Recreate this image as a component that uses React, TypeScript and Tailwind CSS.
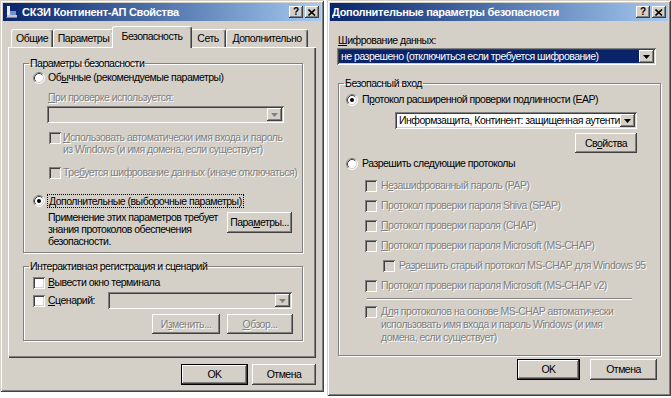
import React from "react";

const FRAME =
  "shadow-[inset_1px_1px_#d4d0c8,inset_-1px_-1px_#404040,inset_2px_2px_#ffffff,inset_-2px_-2px_#808080]";
const RAISED =
  "shadow-[inset_-1px_-1px_#404040,inset_1px_1px_#ffffff,inset_-2px_-2px_#808080,inset_2px_2px_#d4d0c8]";
const SUNKEN =
  "shadow-[inset_1px_1px_#808080,inset_-1px_-1px_#ffffff,inset_2px_2px_#404040,inset_-2px_-2px_#d4d0c8]";
const PANEL = "shadow-[inset_1px_1px_#ffffff,inset_-1px_-1px_#404040,inset_-2px_-2px_#808080]";
const GROUP = "border border-[#808080] shadow-[inset_1px_1px_#ffffff,1px_1px_#ffffff]";
const DIS = "text-[#808080] [text-shadow:1px_1px_0_#ffffff]";

function Radio({ checked = false }: { checked?: boolean }) {
  return (
    <svg width="12" height="12" viewBox="0 0 12 12" className="shrink-0">
      <circle cx="6" cy="6" r="5" fill="#ffffff" />
      <path d="M2.11 9.89 A5.5 5.5 0 0 1 9.89 2.11" stroke="#808080" fill="none" />
      <path d="M9.89 2.11 A5.5 5.5 0 0 1 2.11 9.89" stroke="#ffffff" fill="none" />
      <path d="M2.82 9.18 A4.5 4.5 0 0 1 9.18 2.82" stroke="#404040" fill="none" />
      <path d="M9.18 2.82 A4.5 4.5 0 0 1 2.82 9.18" stroke="#d4d0c8" fill="none" />
      {checked && <circle cx="6" cy="6" r="2" fill="#000000" />}
    </svg>
  );
}

function Check({ disabled = false }: { disabled?: boolean }) {
  return (
    <div
      className={`w-[12px] h-[12px] shrink-0 ${SUNKEN} ${disabled ? "bg-[#d4d0c8]" : "bg-white"}`}
    />
  );
}

function Arrow({ disabled = false }: { disabled?: boolean }) {
  return (
    <svg width="7" height="4" viewBox="0 0 7 4">
      <path d="M0 0H7L3.5 4Z" fill={disabled ? "#808080" : "#000000"} />
    </svg>
  );
}

function Combo({
  className = "",
  children,
  disabled = false,
  selected = false,
}: {
  className?: string;
  children?: React.ReactNode;
  disabled?: boolean;
  selected?: boolean;
}) {
  return (
    <div className={`flex p-[2px] ${SUNKEN} ${disabled ? "bg-[#d4d0c8]" : "bg-white"} ${className}`}>
      <div
        className={`flex-1 min-w-0 overflow-hidden whitespace-nowrap pl-[2px] flex items-center ${
          selected ? "bg-[#0a246a] text-white" : ""
        }`}
      >
        {children}
      </div>
      <div className={`w-[15px] shrink-0 bg-[#d4d0c8] ${RAISED} flex items-center justify-center`}>
        <Arrow disabled={disabled} />
      </div>
    </div>
  );
}

function Btn({
  children,
  className = "",
  def = false,
  disabled = false,
}: {
  children: React.ReactNode;
  className?: string;
  def?: boolean;
  disabled?: boolean;
}) {
  return (
    <div
      className={`flex items-center justify-center whitespace-nowrap bg-[#d4d0c8] ${RAISED} ${
        def ? "border border-black" : ""
      } ${disabled ? DIS : ""} ${className}`}
    >
      {children}
    </div>
  );
}

function TitleButtons() {
  return (
    <div className="flex gap-[2px]">
      <div
        className={`w-[14px] h-[12px] bg-[#d4d0c8] ${RAISED} flex items-center justify-center text-black font-bold text-[10px] leading-[10px] tracking-normal`}
      >
        ?
      </div>
      <div className={`w-[14px] h-[12px] bg-[#d4d0c8] ${RAISED} flex items-center justify-center`}>
        <svg width="8" height="7" viewBox="0 0 8 7">
          <path d="M0.5 0.5L7 6.5M7 0.5L0.5 6.5" stroke="#000" strokeWidth="1.6" />
        </svg>
      </div>
    </div>
  );
}

function TitleBar({ title, icon = false }: { title: string; icon?: boolean }) {
  return (
    <div className="h-[18px] shrink-0 flex items-center bg-linear-to-r from-[#0a246a] to-[#a6caf0] pl-[2px] pr-[2px]">
      {icon && (
        <svg width="14" height="14" viewBox="0 0 14 14" className="mr-[3px] shrink-0">
          <rect x="2" y="1" width="3" height="11" fill="#e8e8e8" />
          <rect x="2" y="10" width="10" height="3" fill="#c8c8c8" />
          <rect x="5" y="6" width="6" height="4" fill="#7090d0" />
          <rect x="1" y="12" width="11" height="1" fill="#808080" />
        </svg>
      )}
      <div className="flex-1 text-white font-bold text-[11px] tracking-[-0.3px] leading-[13px] whitespace-nowrap overflow-hidden">
        {title}
      </div>
      <TitleButtons />
    </div>
  );
}

function Tab({ children, className = "", sel = false }: { children: React.ReactNode; className?: string; sel?: boolean }) {
  return (
    <div
      className={`bg-[#d4d0c8] rounded-t-[3px] border-t border-l border-r border-t-white border-l-white border-r-[#404040] shadow-[inset_-1px_0_#808080] flex items-center justify-center whitespace-nowrap ${
        sel ? "h-[22px] -mx-[2px] -mb-[1px] relative z-10 pb-[3px]" : "h-[18px]"
      } ${className}`}
    >
      {children}
    </div>
  );
}

function LeftDialog() {
  return (
    <div className={`w-[324px] h-[392px] shrink-0 bg-[#d4d0c8] p-[3px] flex flex-col ${FRAME}`}>
      <TitleBar title="СКЗИ Континент-АП Свойства" icon />
      <div className="flex items-end h-[26px] pl-[8px] shrink-0">
        <Tab className="w-[42px]">Общие</Tab>
        <Tab className="w-[61px]">Параметры</Tab>
        <Tab className="w-[80px]" sel>
          Безопасность
        </Tab>
        <Tab className="w-[36px]">Сеть</Tab>
        <Tab className="w-[82px]">Дополнительно</Tab>
      </div>
      <div className={`ml-[5px] w-[308px] h-[311px] shrink-0 ${PANEL} pt-[10px] pl-[15px]`}>
        <fieldset className={`w-[280px] ${GROUP}`}>
          <legend className="ml-[5px] px-[1px] leading-[13px]">Параметры безопасности</legend>
          <div className="pl-[9px] pb-[5px] whitespace-nowrap">
            <div className="flex items-center gap-[3px] h-[13px] mt-[1px]">
              <Radio />
              <span>
                Об<span className="underline">ы</span>чные (рекомендуемые параметры)
              </span>
            </div>
            <div className={`pl-[15px] mt-[7px] h-[13px] ${DIS}`}>
              <span className="underline">П</span>ри проверке используется:
            </div>
            <Combo className="ml-[14px] mt-[2px] w-[237px] h-[17px]" disabled />
            <div className="flex items-start gap-[2px] ml-[16px] mt-[8px]">
              <div className="mt-[1px]">
                <Check disabled />
              </div>
              <div className={`leading-[12px] ${DIS}`}>
                <span className="underline">И</span>спользовать автоматически имя входа и пароль
                <br />
                из Windows (и имя домена, если существует)
              </div>
            </div>
            <div className="flex items-center gap-[2px] ml-[16px] mt-[11px] h-[13px]">
              <Check disabled />
              <div className={DIS}>
                Тре<span className="underline">б</span>уется шифрование данных (иначе отключаться)
              </div>
            </div>
            <div className="flex items-center gap-[2px] h-[14px] mt-[15px]">
              <Radio checked />
              <span className="border border-dotted border-black px-[1px] leading-[12px]">
                <span className="underline">Д</span>ополнительные (выборочные параметры)
              </span>
            </div>
            <div className="flex mt-[3px]">
              <div className="pl-[15px] w-[194px] leading-[12px]">
                Применение этих параметров требует
                <br />
                знания протоколов обеспечения
                <br />
                безопасности.
              </div>
              <Btn className="w-[65px] h-[21px] mt-[1px]">
                <span>
                  Пара<span className="underline">м</span>етры...
                </span>
              </Btn>
            </div>
          </div>
        </fieldset>
        <fieldset className={`mt-[7px] w-[280px] ${GROUP}`}>
          <legend className="ml-[5px] px-[1px] leading-[13px]">Интерактивная регистрация и сценарий</legend>
          <div className="pl-[9px] pb-[6px] whitespace-nowrap">
            <div className="flex items-center gap-[3px] mt-[3px] h-[13px]">
              <Check />
              <span>
                <span className="underline">В</span>ывести окно терминала
              </span>
            </div>
            <div className="flex items-center mt-[3px] h-[17px]">
              <Check />
              <span className="ml-[3px] w-[60px]">
                <span className="underline">С</span>ценарий:
              </span>
              <Combo className="w-[184px] h-[17px]" disabled />
            </div>
            <div className="flex gap-[7px] ml-[119px] mt-[5px]">
              <Btn className="w-[68px] h-[20px]" disabled>
                <span>
                  И<span className="underline">з</span>менить...
                </span>
              </Btn>
              <Btn className="w-[66px] h-[20px]" disabled>
                <span>
                  <span className="underline">О</span>бзор...
                </span>
              </Btn>
            </div>
          </div>
        </fieldset>
      </div>
      <div className="flex justify-end gap-[4px] mt-[6px] pr-[5px]">
        <Btn className="w-[67px] h-[21px]" def>
          OK
        </Btn>
        <Btn className="w-[64px] h-[21px]">Отмена</Btn>
      </div>
    </div>
  );
}

function CheckRow({ children, className = "" }: { children: React.ReactNode; className?: string }) {
  return (
    <div className={`flex items-center gap-[4px] h-[13px] mt-[7px] whitespace-nowrap ${className}`}>
      <Check disabled />
      <span className={DIS}>{children}</span>
    </div>
  );
}

function RightDialog() {
  return (
    <div className={`w-[344px] h-[396px] shrink-0 bg-[#d4d0c8] p-[3px] flex flex-col ${FRAME}`}>
      <TitleBar title="Дополнительные параметры безопасности" />
      <div className="pl-[8px] mt-[13px] h-[13px]">
        <span className="underline">Ш</span>ифрование данных:
      </div>
      <Combo className="ml-[7px] mt-[1px] w-[319px] h-[17px] shrink-0" selected>
        не разрешено (отключиться если требуется шифрование)
      </Combo>
      <fieldset className={`ml-[8px] mt-[12px] w-[323px] ${GROUP}`}>
        <legend className="ml-[5px] px-[1px] leading-[13px]">Безопасный вход</legend>
        <div className="pl-[7px] pb-[11px] whitespace-nowrap">
          <div className="flex items-center gap-[4px] h-[13px] mt-[3px]">
            <Radio checked />
            <span>
              П<span className="underline">р</span>отокол расширенной проверки подлинности (EAP)
            </span>
          </div>
          <Combo className="ml-[49px] mt-[6px] w-[242px] h-[17px]">
            Информзащита, Континент: защищенная аутентификация
          </Combo>
          <Btn className="ml-[229px] mt-[4px] w-[62px] h-[20px]">
            <span>
              Св<span className="underline">о</span>йства
            </span>
          </Btn>
          <div className="flex items-center gap-[4px] h-[13px] mt-[4px]">
            <Radio />
            <span>
              Разрешить сле<span className="underline">д</span>ующие протоколы
            </span>
          </div>
          <CheckRow className="ml-[19px] mt-[9px]">
            Н<span className="underline">е</span>зашифрованный пароль (PAP)
          </CheckRow>
          <CheckRow className="ml-[19px]">
            Про<span className="underline">т</span>окол проверки пароля Shiva (SPAP)
          </CheckRow>
          <CheckRow className="ml-[19px]">
            <span className="underline">П</span>ротокол проверки пароля (CHAP)
          </CheckRow>
          <CheckRow className="ml-[19px]">
            <span className="underline">П</span>ротокол проверки пароля Microsoft (MS-CHAP)
          </CheckRow>
          <CheckRow className="ml-[37px]">
            Ра<span className="underline">з</span>решить старый протокол MS-CHAP для Windows 95
          </CheckRow>
          <CheckRow className="ml-[19px]">
            Прото<span className="underline">к</span>ол проверки пароля Microsoft (MS-CHAP v2)
          </CheckRow>
          <div className="ml-[21px] mt-[6px] w-[265px] h-[2px] border-t border-b border-t-[#808080] border-b-white" />
          <div className="flex items-start gap-[4px] ml-[19px] mt-[5px]">
            <div className="mt-[1px]">
              <Check disabled />
            </div>
            <div className={`leading-[13px] ${DIS}`}>
              Д<span className="underline">л</span>я протоколов на основе MS-CHAP автоматически
              <br />
              использовать имя входа и пароль Windows (и имя
              <br />
              домена, если существует)
            </div>
          </div>
        </div>
      </fieldset>
      <div className="flex justify-end gap-[10px] mt-[3px] pr-[11px]">
        <Btn className="w-[63px] h-[21px]" def>
          OK
        </Btn>
        <Btn className="w-[67px] h-[21px]">Отмена</Btn>
      </div>
    </div>
  );
}

export default function App() {
  return (
    <div className="w-[671px] h-[398px] overflow-hidden bg-white flex gap-[3px] text-[10.5px] tracking-[-0.5px] leading-[13px] text-black [font-family:'Liberation_Sans',Arial,sans-serif]">
      <LeftDialog />
      <RightDialog />
    </div>
  );
}
